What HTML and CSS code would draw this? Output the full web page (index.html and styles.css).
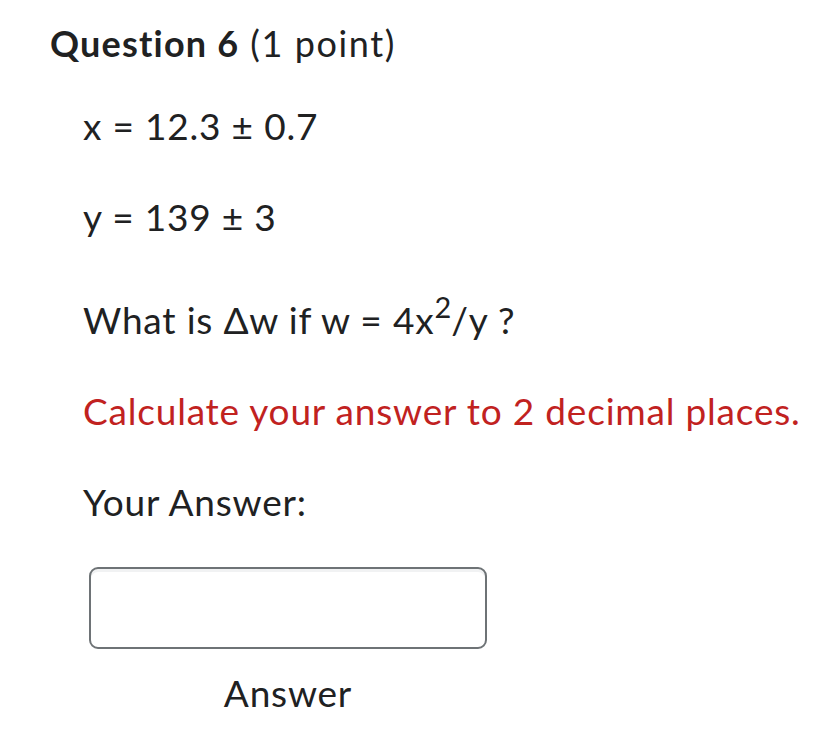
FILE: index.html
```html
<!DOCTYPE html>
<html lang="en">
<head>
<meta charset="utf-8">
<title>Question 6</title>
<link rel="stylesheet" href="styles.css">
</head>
<body>
<div class="question">
  <h2 class="q-title"><strong>Question 6</strong> <span class="pts">(1 point)</span></h2>
  <div class="q-body">
    <p class="first">x = 12.3 ± 0.7</p>
    <p>y = 139 ± 3</p>
    <p class="formula">What is Δw if w = 4x<sup>2</sup>/y ?</p>
    <p class="warn">Calculate your answer to 2 decimal places.</p>
    <p>Your Answer:</p>
    <div class="answer">
      <input class="answer-input" type="text" aria-label="Answer">
      <div class="answer-label">Answer</div>
    </div>
  </div>
</div>
</body>
</html>
```

FILE: styles.css
```css
html, body {
  margin: 0;
  padding: 0;
  background: #ffffff;
}
body {
  font-family: Lato, "Open Sans", sans-serif;
  color: #202122;
}
.question {
  padding: 22px 0 0 50px;
}
.q-title {
  margin: 0;
  font-size: 36px;
  line-height: 42px;
  font-weight: 400;
  letter-spacing: 1.6px;
}
.q-title strong {
  font-weight: 700;
  letter-spacing: 1.2px;
}
.q-body {
  padding-left: 33px;
  font-size: 37px;
  letter-spacing: 0.8px;
}
.q-body p {
  margin: 51px 0 0;
  line-height: 40px;
}
.q-body p.first {
  margin-top: 42px;
}
.q-body p.formula {
  margin-top: 63px;
}
sup {
  font-size: 0.78em;
  line-height: 0;
  vertical-align: 0.55em;
  letter-spacing: 0;
}
.warn {
  color: #c1221f;
}
.answer {
  width: 398px;
  margin: 45px 0 0 6px;
  display: flex;
  flex-direction: column;
  align-items: center;
}
.answer-input {
  box-sizing: border-box;
  width: 100%;
  height: 82px;
  margin: 0;
  border: 2px solid #6e7376;
  border-radius: 9px;
  box-shadow: inset 0 3px 0 #f1f2f3;
  background: #fff;
}
.answer-label {
  margin-top: 24px;
  line-height: 40px;
}
```
